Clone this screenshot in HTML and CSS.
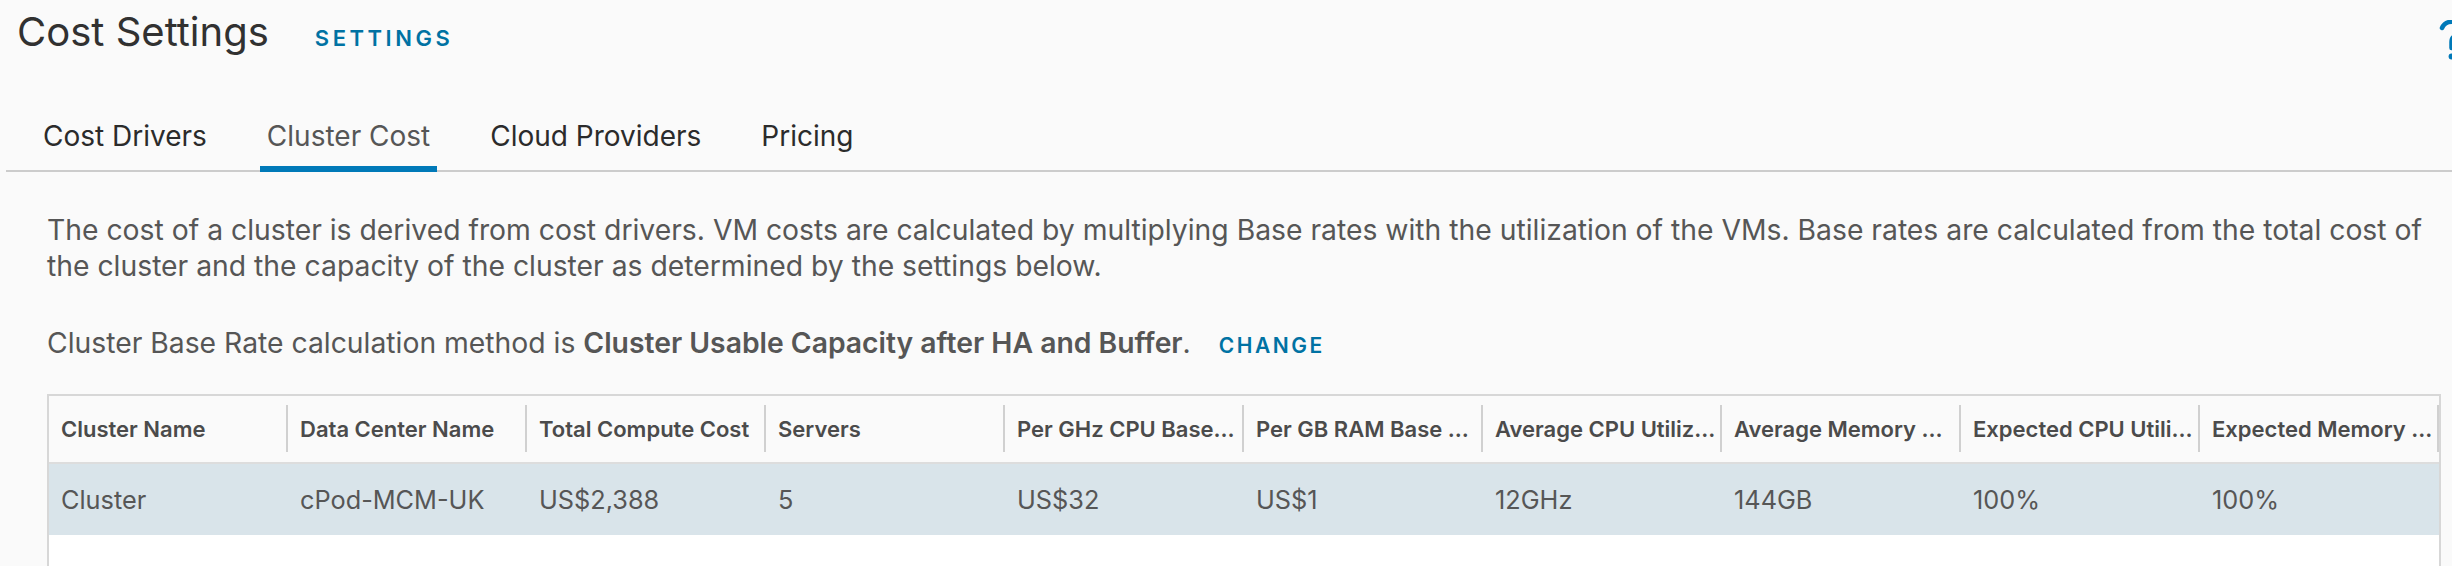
FILE: index.html
```html
<!DOCTYPE html>
<html>
<head>
 <meta http-equiv="content-type" content="text/html; charset=utf-8" />
 <title>Cost Settings</title>
 <link rel="stylesheet" href="styles.css">
</head>
<body>
 <header class="page-head">
  <h1 class="title">Cost Settings</h1>
  <a class="head-link" href="#">SETTINGS</a>
  <span class="help">
   <svg width="26" height="42" viewBox="0 0 26 42">
    <path d="M3 8 C5 3.5 8.5 1.8 12.5 1.8 C17.5 1.8 21 5 21 9 C21 13 17.5 15 15 16.5 C13 17.8 12.5 19.5 12.5 22 V28" fill="none" stroke="#0079b8" stroke-width="4.5" stroke-linecap="round" />
    <circle cx="12.5" cy="36.5" r="2.9" fill="#0079b8" />
   </svg>
  </span>
 </header>

 <nav class="tabs">
  <a class="tab" href="#">Cost Drivers</a>
  <a class="tab active" href="#">Cluster Cost</a>
  <a class="tab" href="#">Cloud Providers</a>
  <a class="tab" href="#">Pricing</a>
 </nav>

 <section class="content">
  <p class="intro">The cost of a cluster is derived from cost drivers. VM costs are calculated by multiplying Base rates with the utilization of the VMs. Base rates are calculated from the total cost of the cluster and the capacity of the cluster as determined by the settings below.</p>
  <p class="method">Cluster Base Rate calculation method is <b>Cluster Usable Capacity after HA and Buffer</b>. <a class="link" href="#">CHANGE</a></p>

  <div class="grid">
   <table id="clusters">
    <thead>
     <tr>
      <th>Cluster Name</th>
      <th>Data Center Name</th>
      <th>Total Compute Cost</th>
      <th>Servers</th>
      <th>Per GHz CPU Base Rate</th>
      <th>Per GB RAM Base Rate</th>
      <th>Average CPU Utilization</th>
      <th>Average Memory Utilization</th>
      <th>Expected CPU Utilization</th>
      <th>Expected Memory Utilization</th>
     </tr>
    </thead>
    <tbody>
     <tr class="selected">
      <td>Cluster</td>
      <td>cPod-MCM-UK</td>
      <td>US$2,388</td>
      <td>5</td>
      <td>US$32</td>
      <td>US$1</td>
      <td>12GHz</td>
      <td>144GB</td>
      <td>100%</td>
      <td>100%</td>
     </tr>
    </tbody>
   </table>
  </div>
 </section>
</body>
</html>
```

FILE: styles.css
```css
* {
 padding: 0;
 margin: 0;
 box-sizing: border-box;
}
body {
 font-family: Inter, Lato, sans-serif;
 background: #fafafa;
 color: #565656;
 overflow: hidden;
}
a {
 text-decoration: none;
}

/* page title row */
.page-head {
 display: flex;
 align-items: baseline;
 height: 64px;
 padding-left: 17px;
}
.title {
 font-size: 40px;
 font-weight: 400;
 line-height: 64px;
 color: #313131;
}
.head-link {
 margin-left: 46px;
 font-size: 22px;
 font-weight: 600;
 letter-spacing: 0.16em;
 color: #0072a3;
}
.help {
 margin-left: auto;
 margin-right: -13px;
 align-self: flex-start;
 padding-top: 20px;
}

/* tabs */
.tabs {
 display: flex;
 gap: 46px;
 margin: 52px 0 0 6px;
 padding-left: 30px;
 border-bottom: 2px solid #cccccc;
}
.tab {
 padding: 0 7px 16px;
 margin-bottom: -2px;
 font-size: 28px;
 line-height: 40px;
 color: #2b2b2b;
}
.tab.active {
 color: #565656;
 box-shadow: inset 0 -6px 0 #0079b8;
}

/* text above the grid */
.content {
 padding-left: 47px;
}
.intro {
 max-width: 2394px;
 margin-top: 40px;
 font-size: 28.3px;
 line-height: 36px;
}
.method {
 margin-top: 41px;
 font-size: 28.3px;
 line-height: 36px;
}
.method b {
 font-weight: 600;
}
.link {
 margin-left: 20px;
 font-size: 21px;
 font-weight: 600;
 letter-spacing: 0.12em;
 color: #0072a3;
}

/* datagrid */
.grid {
 width: 2394px;
 height: 200px;
 margin-top: 30px;
 border: 2px solid #d7d7d7;
 border-bottom: none;
 background: #fff;
 overflow: hidden;
}
#clusters {
 table-layout: fixed;
 width: 2390px;
 border-collapse: collapse;
}
#clusters th {
 position: relative;
 height: 67px;
 padding: 0 6px 0 12px;
 text-align: left;
 font-size: 22px;
 font-weight: 600;
 color: #4b4b4b;
 background: #fafafa;
 border-bottom: 2px solid #dddddd;
 white-space: nowrap;
 overflow: hidden;
 text-overflow: ellipsis;
}
#clusters th::after {
 content: "";
 position: absolute;
 right: 0;
 top: 9px;
 bottom: 10px;
 width: 2px;
 background: #d0d0d0;
}
#clusters td {
 height: 72px;
 padding: 0 12px;
 font-size: 25.3px;
 white-space: nowrap;
}
#clusters .selected td {
 background: #d9e4ea;
}
```
